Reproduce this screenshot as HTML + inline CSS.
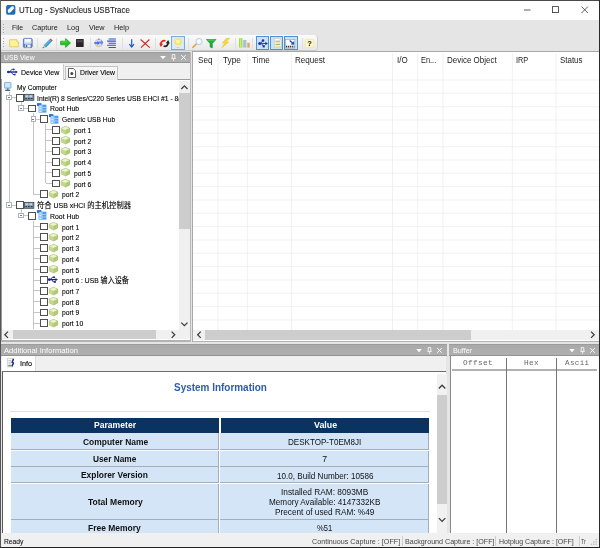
<!DOCTYPE html>
<html><head><meta charset="utf-8"><title>UTLog - SysNucleus USBTrace</title>
<style>
*{box-sizing:border-box;margin:0;padding:0}
html,body{width:600px;height:548px;overflow:hidden;background:#e5e5e5}
body{position:relative;font-family:"Liberation Sans","Noto Sans CJK SC",sans-serif;color:#1a1a1a}
.a{position:absolute}
i{display:block;position:absolute;font-style:normal}
span{position:absolute;white-space:nowrap;line-height:1}
svg{position:absolute;overflow:visible}
/* title */
#title{left:0;top:0;width:600px;height:20px;background:#fff;border-top:0.9px solid #4a4a4a}
#ttext{left:19.6px;top:5.9px;font-size:8.7px;color:#1c1c1c;-webkit-text-stroke:0.1px #1c1c1c}
/* menu */
#menubar{left:0;top:20px;width:600px;height:14px;background:#e5e5e5}
.mi{top:23.6px;font-size:8.05px;color:#1a1a1a}
/* toolbar */
#toolbar{left:1px;top:35px;width:317.2px;height:16px;background:linear-gradient(#fbfbfb,#f2f2f2 50%,#e8e8e8);border-radius:0 3.5px 3.5px 0;border-right:1px solid #cfcfcf;border-bottom:1px solid #c9c9c9}
.sep{width:0.9px;height:11px;top:37.6px;background:#dfdfdf}
.grip{left:3.4px;width:1px;background:repeating-linear-gradient(#a8a8a8 0 1px,transparent 1px 2.6px)}
/* panel headers */
.ph{background:linear-gradient(#a9a9a9,#b0b0b0);height:10.8px;border-top:0.6px solid #9c9c9c;border-bottom:1px solid #929292}
.pht{font-size:7.4px;color:#fff;top:1.4px;left:4px}
.hic{top:0;height:10px}
/* tree */
.tl{font-size:8.1px;color:#000;-webkit-text-stroke:0.12px #000;line-height:11px;height:11px;transform:scaleX(.83);transform-origin:0 0}
.tl em{font-style:normal;font-size:8.5px}
.cb{width:7.9px;height:7.8px;border:0.8px solid #505050;background:#fff}
.ex{width:5.4px;height:5.4px;border:0.7px solid #a9b4c0;background:#fff}
.ex:after{content:"";position:absolute;left:0.8px;right:0.8px;top:1.6px;height:0.8px;background:#6f7f95}
.vl{width:0.7px;background:#c4c4c4}
.hl{height:0.7px;background:#c4c4c4}
/* grid */
.gh{font-size:8.3px;top:56px;color:#1c1c1c}
/* scrollbars */
.sb{background:#f0f0f0}
.th{background:#cdcdcd}
/* info */
.ih{font-size:8.2px;font-weight:bold;text-align:center;line-height:1}
.cell{background:#d5e5f8;border-right:0.8px solid #a3aebb;border-bottom:0.8px solid #a3aebb}
.hd{background:#0a3360;border:0.6px solid #0a3360}
.ct{font-size:8.8px;color:#111;text-align:center;transform:translateX(-50%)}
.cb2{font-weight:bold;font-size:8.9px}
.st{font-size:7.6px;color:#444;top:537.6px}
.mono{font-family:"Liberation Mono",monospace;font-size:8px;color:#686868;top:358.6px;letter-spacing:0.35px}
#root{position:absolute;left:0;top:0;width:600px;height:548px;overflow:hidden;filter:saturate(1.001)}
</style></head><body><div id="root">

<!-- title bar -->
<div id="title" class="a"></div>
<svg style="left:5.9px;top:4.7px" width="9.6" height="10" viewBox="0 0 9.6 10"><rect x="0.1" y="0.1" width="9.3" height="9.7" rx="1.7" fill="#1f6db6"></rect><path d="M2.1 7.4 1.7 5 5.6 1.4 7.4 1.6 8 3.4 4.6 7.3 2.8 7.9Z" fill="#f4faff"></path><path d="M5.6 1.4 7.4 1.6 8 3.4" fill="none" stroke="#cfe6fa" stroke-width="0.5"></path></svg>
<span id="ttext" style="transform: scaleX(0.9095); left: 19.4px; transform-origin: 0px 0px;">UTLog - SysNucleus USBTrace</span>
<svg style="left:523px;top:5px" width="70" height="10" viewBox="0 0 70 10"><path d="M0.9 5h6.6" stroke="#333" stroke-width="0.8"></path><rect x="29.4" y="1.6" width="6" height="6" fill="none" stroke="#333" stroke-width="0.8"></rect><path d="M58.5 1.6 64.9 8M64.9 1.6 58.5 8" stroke="#333" stroke-width="0.8"></path></svg>

<!-- menu bar -->
<div id="menubar" class="a"></div>
<i class="grip" style="top:23.5px;height:9px"></i>
<span class="mi" style="left: 11.6px; transform: scaleX(0.8559); transform-origin: 0px 0px;">File</span>
<span class="mi" style="left: 32.4px; transform: scaleX(0.9008); transform-origin: 0px 0px;">Capture</span>
<span class="mi" style="left: 67.4px; transform: scaleX(0.9153); transform-origin: 0px 0px;">Log</span>
<span class="mi" style="left: 89.1px; transform: scaleX(0.9019); transform-origin: 0px 0px;">View</span>
<span class="mi" style="left: 114.4px; transform: scaleX(0.9057); transform-origin: 0px 0px;">Help</span>

<!-- toolbar -->
<div id="toolbar" class="a"></div>
<i class="grip" style="top:38px;height:10px"></i>
<i style="left:171.1px;top:36.1px;width:13.8px;height:13.5px;background:#d9eaf8;border:0.9px solid #78aadc"></i>
<i style="left:255.8px;top:36.3px;width:13.7px;height:13.3px;background:#cbe3f8;border:0.9px solid #4a92d4"></i>
<i style="left:269.9px;top:36.3px;width:13.2px;height:13.3px;background:#cbe3f8;border:0.9px solid #4a92d4"></i>
<i style="left:283.5px;top:36.3px;width:14.2px;height:13.3px;background:#cbe3f8;border:0.9px solid #4a92d4"></i>
<i class="sep" style="left:37px"></i>
<i class="sep" style="left:56.3px"></i>
<i class="sep" style="left:89.6px"></i>
<i class="sep" style="left:122.3px"></i>
<i class="sep" style="left:155px"></i>
<i class="sep" style="left:188px"></i>
<i class="sep" style="left:234.5px"></i>
<i class="sep" style="left:252.4px"></i>
<i class="sep" style="left:301.8px"></i>
<svg style="left:9.0px;top:38.6px" width="10.2" height="8.4" viewBox="0 0 10.2 8.4"><path d="M0.6 0.7h7.4v2.2h1.6v2.2l-0.8 0.6 0.8 0.6v1.5h-9z" fill="#fdf294" stroke="#d6bd4e" stroke-width="0.7"></path></svg>
<svg style="left:23.3px;top:38.3px" width="9.6" height="10" viewBox="0 0 9.6 10"><rect x="0.4" y="0.4" width="8.8" height="9.2" rx="1.1" fill="#5a84cc" stroke="#4468b0" stroke-width="0.7"></rect><rect x="1.3" y="0.9" width="7" height="4.6" fill="#f6f9fe"></rect><rect x="1.3" y="3.6" width="7" height="1.9" fill="#d6e3f5"></rect><rect x="2.1" y="6.5" width="5.4" height="2.9" fill="#eef2fa"></rect><rect x="2.8" y="7" width="1.5" height="2.2" fill="#4468b0"></rect></svg>
<svg style="left:41.6px;top:37.6px" width="11" height="10.6" viewBox="0 0 11 10.6"><path d="M1.8 7.2 7.4 1.6 9.6 3.8 4 9.4Z" fill="#2aa2e2"></path><path d="M7.4 1.6 8.6 0.5 10.7 2.6 9.6 3.8Z" fill="#e2452f"></path><path d="M0.5 10.2 1.8 7.2 4 9.4Z" fill="#edb84a"></path><path d="M0.5 10.2 1 9 1.9 9.8Z" fill="#5a3a1a"></path><path d="M2.6 7.9 8.2 2.4" stroke="#7fd0f5" stroke-width="0.7"></path></svg>
<svg style="left:60.1px;top:38.2px" width="11" height="10" viewBox="0 0 11 10"><path d="M0.6 3.2h5V0.6L10.5 5 5.6 9.4V6.8H0.6Z" fill="#24c424" stroke="#1a9a1e" stroke-width="0.7" stroke-linejoin="round"></path><path d="M1.2 3.9h5V2" stroke="#6fe36f" stroke-width="0.6" fill="none"></path></svg>
<svg style="left:76.0px;top:39.1px" width="7.8" height="8" viewBox="0 0 7.8 8"><rect x="0" y="0" width="7.7" height="7.9" rx="0.5" fill="#262626"></rect><rect x="0.8" y="0.8" width="6.1" height="2.6" fill="#484848"></rect></svg>
<svg style="left:93.6px;top:38.2px" width="9.6" height="10" viewBox="0 0 9.6 10"><circle cx="4.9" cy="5" r="3.9" fill="#d4dcec" stroke="#a9b4cc" stroke-width="0.5"></circle><path d="M0.3 4.3h3.2V2.8L5.6 5 3.5 7.2V5.7H0.3Z" fill="#3d5fd0"></path><path d="M5.2 3.4h2V2.1L9.4 4.5 7.2 6.9V5.6H5.2Z" fill="#6a86dc"></path><path d="M2.6 8.2h3" stroke="#e8d060" stroke-width="1"></path><path d="M4.9 0.4v1.6" stroke="#3a3a6a" stroke-width="0.6"></path></svg>
<svg style="left:107.4px;top:38.0px" width="9" height="10" viewBox="0 0 9 10"><path d="M1.6 1h7.3M0.1 3.1h8.8M1.6 5.2h7.3M0.1 7.3h8.8M1.6 9.4h7.3" stroke="#2455da" stroke-width="1.05"></path></svg>
<svg style="left:129.0px;top:39.4px" width="5.4" height="8.6" viewBox="0 0 5.4 8.6"><path d="M2.7 0.2v7.4" stroke="#1a50c8" stroke-width="1.15"></path><path d="M0.4 5.2 2.7 8 5 5.2" stroke="#1a50c8" stroke-width="1.15" fill="none"></path></svg>
<svg style="left:140.3px;top:38.9px" width="10.4" height="9" viewBox="0 0 10.4 9"><path d="M0.6 0.5 9.8 8.6M9.4 0.5 1 8.6" stroke="#d22a22" stroke-width="1.15" fill="none"></path></svg>
<svg style="left:158.8px;top:38.9px" width="11" height="9" viewBox="0 0 11 9"><path d="M2 5.6A3.2 3.2 0 0 1 6.4 1.9" stroke="#dc2a22" stroke-width="1.8" fill="none"></path><path d="M0.2 4.4 4.2 4.8 1.8 8Z" fill="#dc2a22"></path><path d="M9 3.2A3.2 3.2 0 0 1 4.6 7" stroke="#222" stroke-width="1.8" fill="none"></path><path d="M10.8 4.5 6.8 4.2 9.2 1Z" fill="#222"></path></svg>
<svg style="left:174.0px;top:37.6px" width="8" height="10.6" viewBox="0 0 8 10.6"><circle cx="4" cy="3.8" r="3.5" fill="#fbe25a"></circle><circle cx="4" cy="3.6" r="2" fill="#fff6b0"></circle><path d="M2.6 6.8h2.8v2.4h-2.8z" fill="#f3ecc8"></path><path d="M2.8 9.2h2.4v0.8h-2.4z" fill="#d8c88a"></path></svg>
<svg style="left:192.0px;top:38.0px" width="11" height="10.2" viewBox="0 0 11 10.2"><path d="M4.8 5.6 0.8 9.4" stroke="#e2a644" stroke-width="1.5" stroke-linecap="round"></path><circle cx="7" cy="3.6" r="3.1" fill="#eef7ff" stroke="#a9c4dc" stroke-width="0.8"></circle><circle cx="6.4" cy="3" r="1.2" fill="#fff"></circle></svg>
<svg style="left:205.8px;top:38.6px" width="10.4" height="9.4" viewBox="0 0 10.4 9.4"><path d="M0.4 0.5h9.6L6.3 4.6V9L4.1 7.9V4.6Z" fill="#1fae3c" stroke="#158530" stroke-width="0.6" stroke-linejoin="round"></path><path d="M1.6 1.2h7.2" stroke="#5fd878" stroke-width="0.7"></path></svg>
<svg style="left:221.0px;top:38.2px" width="9.2" height="10" viewBox="0 0 9.2 10"><path d="M5.4 0.3 1.2 5h2.4L1 9.7 7.8 3.9H5.2L8.8 0.3Z" fill="#f6d838" stroke="#e8b830" stroke-width="0.4"></path></svg>
<svg style="left:239.0px;top:38.2px" width="11" height="10" viewBox="0 0 11 10"><rect x="0" y="0.2" width="3.4" height="9.4" fill="#a6da3c"></rect><rect x="1" y="0.6" width="1.2" height="8.6" fill="#c8ee78"></rect><rect x="4.1" y="2" width="3.3" height="7.6" fill="#a4c2dc"></rect><rect x="8.3" y="4.8" width="2.4" height="4.8" fill="#e4a452"></rect></svg>
<svg style="left:257.8px;top:38.8px" width="10" height="9" viewBox="0 0 10 9"><g fill="#2432a2"><circle cx="1.7" cy="4.5" r="1.5"></circle><circle cx="5" cy="1.6" r="1.3"></circle><rect x="4.6" y="6.2" width="2.2" height="2.2"></rect><path d="M7.4 2.8 9.9 4.5 7.4 6.2Z"></path></g><path d="M1.7 4.5h6.4M2.4 4.5 5 1.6M3.4 4.5 5.6 7.3" stroke="#2432a2" stroke-width="0.9" fill="none"></path></svg>
<svg style="left:273.6px;top:38.4px" width="7.6" height="9.6" viewBox="0 0 7.6 9.6"><path d="M0.4 0.4h4.6l2.2 2.2v6.6h-6.8z" fill="#fffef4" stroke="#b8b89a" stroke-width="0.5"></path><path d="M1.4 3.2h4.8M1.4 6.4h4.8" stroke="#56b456" stroke-width="0.8"></path><path d="M1.4 4.8h4.8M1.4 8h4.8" stroke="#e8c84a" stroke-width="0.8"></path></svg>
<svg style="left:285.4px;top:38.6px" width="10.4" height="9.4" viewBox="0 0 10.4 9.4"><rect x="0.3" y="0.3" width="9.6" height="8.8" fill="#fdfdfd" stroke="#8a8a8a" stroke-width="0.5"></rect><path d="M4.8 1.4 8 4.4" stroke="#2050c8" stroke-width="1.4"></path><path d="M9.2 2 9.2 5.8 5.6 5.4Z" fill="#2050c8"></path><path d="M1 7.6h8.4" stroke="#333" stroke-width="1.8" stroke-dasharray="1.2 0.7"></path></svg>
<svg style="left:304.6px;top:39.0px" width="9.2" height="9" viewBox="0 0 9.2 9"><rect x="0.3" y="0.3" width="8.6" height="8.4" rx="1.2" fill="#fdf7c6" stroke="#e4dc9a" stroke-width="0.5"></rect><text x="4.6" y="7.3" font-size="7.6" font-weight="bold" text-anchor="middle" font-family="Liberation Sans,sans-serif" fill="#111">?</text></svg>

<!-- USB View panel -->
<div class="a ph" style="left:1px;top:52px;width:188.6px"><span class="pht" style="transform: scaleX(0.9233); left: 2.6px; transform-origin: 0px 0px;">USB View</span></div>
<svg style="left:158px;top:53px" width="30" height="9" viewBox="0 0 30 9"><path d="M2.2 3 7.8 3 5 6.3Z" fill="#fff"></path><path d="M14.2 1.6v3.8M16.8 1.6v3.8M13.4 5.4h4.4M15.6 5.4v2.6M14.2 1.6h2.6" stroke="#fff" stroke-width="0.8" fill="none"></path><path d="M23.2 2 27.8 6.8M27.8 2 23.2 6.8" stroke="#fff" stroke-width="0.9"></path></svg>
<!-- tab strip -->
<div class="a" style="left:1px;top:63px;width:188.6px;height:17.2px;background:#f0f0f0;border-bottom:1px solid #9c9c9c"></div>
<div class="a" style="left:2px;top:64.2px;width:61.8px;height:16.3px;background:#fff;border-right:1px solid #d0d0d0"></div>
<div class="a" style="left:64.6px;top:66.2px;width:53.4px;height:13.4px;background:linear-gradient(#f8f8f8,#ebebeb);border:1px solid #c2c2c2;border-bottom:none"></div>
<svg style="left:6.5px;top:67.6px" width="11" height="8" viewBox="0 0 11 8"><path d="M0.3 4h9" stroke="#1a2494" stroke-width="1.4"></path><path d="M8.6 2.4 10.9 4 8.6 5.6Z" fill="#1d2fa0"></path><circle cx="1.4" cy="4" r="1.3" fill="#1d2fa0"></circle><path d="M2.6 4 4.8 1.4h1.6M4.2 4 6 6.6h1.2" stroke="#1d2fa0" stroke-width="0.9" fill="none"></path><circle cx="6.8" cy="1.4" r="0.9" fill="#1d2fa0"></circle><rect x="7" y="5.8" width="1.6" height="1.6" fill="#1d2fa0"></rect></svg>
<span class="tl" style="left: 20.9px; top: 66.7px; transform: scaleX(0.8628); transform-origin: 0px 0px;">Device View</span>
<svg style="left:67.5px;top:67.6px" width="8" height="10" viewBox="0 0 8 10"><path d="M0.5 0.5h4.8l2.2 2.2v6.8h-7z" fill="#fff" stroke="#333" stroke-width="0.8"></path><circle cx="3.8" cy="5.6" r="1.5" fill="#444"></circle></svg>
<span class="tl" style="left: 80.3px; top: 67.1px; transform: scaleX(0.8464); transform-origin: 0px 0px;">Driver View</span>
<!-- tree area -->
<div class="a" style="left:1px;top:80px;width:188.6px;height:260px;background:#fff;border-left:1px solid #9a9a9a"></div>
<i class="vl" style="left:8.6px;top:91.8px;height:113.1px"></i>
<i class="hl" style="left:9.0px;top:97.1px;width:7.0px"></i>
<i class="hl" style="left:9.0px;top:204.5px;width:7.0px"></i>
<i class="vl" style="left:20.8px;top:101.5px;height:6.7px"></i>
<i class="hl" style="left:21.2px;top:107.9px;width:7.1px"></i>
<i class="vl" style="left:32.9px;top:113.3px;height:80.9px"></i>
<i class="hl" style="left:33.3px;top:118.6px;width:7.1px"></i>
<i class="hl" style="left:33.3px;top:193.8px;width:7.1px"></i>
<i class="vl" style="left:45.1px;top:124.0px;height:59.4px"></i>
<i class="hl" style="left:45.5px;top:129.3px;width:7.1px"></i>
<i class="hl" style="left:45.5px;top:140.1px;width:7.1px"></i>
<i class="hl" style="left:45.5px;top:150.8px;width:7.1px"></i>
<i class="hl" style="left:45.5px;top:161.6px;width:7.1px"></i>
<i class="hl" style="left:45.5px;top:172.3px;width:7.1px"></i>
<i class="hl" style="left:45.5px;top:183.0px;width:7.1px"></i>
<i class="vl" style="left:20.8px;top:208.9px;height:6.7px"></i>
<i class="hl" style="left:21.2px;top:215.2px;width:7.1px"></i>
<i class="vl" style="left:32.9px;top:220.7px;height:108.8px"></i>
<i class="hl" style="left:33.3px;top:226.0px;width:7.1px"></i>
<i class="hl" style="left:33.3px;top:236.7px;width:7.1px"></i>
<i class="hl" style="left:33.3px;top:247.5px;width:7.1px"></i>
<i class="hl" style="left:33.3px;top:258.2px;width:7.1px"></i>
<i class="hl" style="left:33.3px;top:269.0px;width:7.1px"></i>
<i class="hl" style="left:33.3px;top:279.7px;width:7.1px"></i>
<i class="hl" style="left:33.3px;top:290.4px;width:7.1px"></i>
<i class="hl" style="left:33.3px;top:301.2px;width:7.1px"></i>
<i class="hl" style="left:33.3px;top:311.9px;width:7.1px"></i>
<i class="hl" style="left:33.3px;top:322.7px;width:7.1px"></i>
<svg class="ti" style="left:3.8px;top:81.87px" width="8" height="10" viewBox="0 0 8 10"><rect x="0.4" y="0.4" width="6.6" height="5.8" rx="0.7" fill="#a9d8f6" stroke="#7aa7cf" stroke-width="0.8"></rect><rect x="1.3" y="1.2" width="4.8" height="3.6" fill="#c9e9fc"></rect><rect x="2.8" y="6.4" width="1.8" height="1.4" fill="#5a6f86"></rect><rect x="1.2" y="7.7" width="5" height="1.3" fill="#4f6278"></rect></svg>
<span class="tl" style="left: 17.2px; top: 81.92px; transform: scaleX(0.8152); transform-origin: 0px 0px;">My Computer</span>
<i class="ex" style="left:6.3px;top:94.71px"></i>
<i class="cb" style="left:16.0px;top:93.76px"></i>
<svg class="ti" style="left:24.1px;top:94.21px" width="10.4" height="6.6" viewBox="0 0 10.4 6.6"><rect x="0.3" y="0.3" width="9.6" height="6" fill="#7e93a8" stroke="#2f3a48" stroke-width="0.7"></rect><rect x="1.4" y="1.3" width="2.8" height="2" fill="#c4d2e0"></rect><rect x="5.4" y="1.3" width="2.8" height="2" fill="#c4d2e0"></rect><path d="M1.4 4.6h1.6M4 4.6h1.8M6.8 4.6h1.8" stroke="#27313f" stroke-width="1"></path></svg>
<span class="tl" style="left: 37.2px; top: 92.66px; transform: scaleX(0.8379); transform-origin: 0px 0px;">Intel(R) 8 Series/C220 Series USB EHCI #1 - 8(</span>
<i class="ex" style="left:18.4px;top:105.45px"></i>
<i class="cb" style="left:28.0px;top:104.50px"></i>
<svg class="ti" style="left:36.9px;top:102.85px" width="10" height="10" viewBox="0 0 10 10"><rect x="0" y="0.1" width="4.4" height="3" fill="#2b6fd0"></rect><rect x="1.6" y="1.7" width="7.8" height="7.9" fill="#4b9bf0"></rect><path d="M1.6 4.4h7.8M1.6 7h7.8" stroke="#cfe8ff" stroke-width="0.7"></path><path d="M5.2 1.7v7.9" stroke="#a8d2fb" stroke-width="0.7"></path><rect x="2.2" y="2.4" width="2.4" height="1.4" fill="#dff0ff"></rect><rect x="2.2" y="5" width="2.4" height="1.4" fill="#dff0ff"></rect><rect x="2.2" y="7.6" width="2.4" height="1.4" fill="#dff0ff"></rect></svg>
<span class="tl" style="left: 49.8px; top: 103.4px; transform: scaleX(0.8508); transform-origin: 0px 0px;">Root Hub</span>
<i class="ex" style="left:30.6px;top:116.19px"></i>
<i class="cb" style="left:40.0px;top:115.24px"></i>
<svg class="ti" style="left:48.9px;top:113.59px" width="10" height="10" viewBox="0 0 10 10"><rect x="0" y="0.1" width="4.4" height="3" fill="#2b6fd0"></rect><rect x="1.6" y="1.7" width="7.8" height="7.9" fill="#4b9bf0"></rect><path d="M1.6 4.4h7.8M1.6 7h7.8" stroke="#cfe8ff" stroke-width="0.7"></path><path d="M5.2 1.7v7.9" stroke="#a8d2fb" stroke-width="0.7"></path><rect x="2.2" y="2.4" width="2.4" height="1.4" fill="#dff0ff"></rect><rect x="2.2" y="5" width="2.4" height="1.4" fill="#dff0ff"></rect><rect x="2.2" y="7.6" width="2.4" height="1.4" fill="#dff0ff"></rect></svg>
<span class="tl" style="left: 61.9px; top: 114.14px; transform: scaleX(0.8255); transform-origin: 0px 0px;">Generic USB Hub</span>
<i class="cb" style="left:52.0px;top:125.98px"></i>
<svg class="ti" style="left:60.8px;top:125.53px" width="9" height="8.4" viewBox="0 0 9 8.4"><path d="M4.5 0.3 8.7 2 8.7 6 4.5 8.1 0.3 6 0.3 2Z" fill="#c6d88e"></path><path d="M4.5 0.3 8.7 2 4.5 3.9 0.3 2Z" fill="#edf4d2"></path><path d="M4.5 3.9 8.7 2 8.7 6 4.5 8.1Z" fill="#b2ca76"></path><path d="M4.5 0.3 8.7 2 8.7 6 4.5 8.1 0.3 6 0.3 2Z" fill="none" stroke="#9fb562" stroke-width="0.5"></path></svg>
<span class="tl" style="left:73.8px;top:124.88px">port 1</span>
<i class="cb" style="left:52.0px;top:136.72px"></i>
<svg class="ti" style="left:60.8px;top:136.27px" width="9" height="8.4" viewBox="0 0 9 8.4"><path d="M4.5 0.3 8.7 2 8.7 6 4.5 8.1 0.3 6 0.3 2Z" fill="#c6d88e"></path><path d="M4.5 0.3 8.7 2 4.5 3.9 0.3 2Z" fill="#edf4d2"></path><path d="M4.5 3.9 8.7 2 8.7 6 4.5 8.1Z" fill="#b2ca76"></path><path d="M4.5 0.3 8.7 2 8.7 6 4.5 8.1 0.3 6 0.3 2Z" fill="none" stroke="#9fb562" stroke-width="0.5"></path></svg>
<span class="tl" style="left:73.8px;top:135.62px">port 2</span>
<i class="cb" style="left:52.0px;top:147.46px"></i>
<svg class="ti" style="left:60.8px;top:147.01px" width="9" height="8.4" viewBox="0 0 9 8.4"><path d="M4.5 0.3 8.7 2 8.7 6 4.5 8.1 0.3 6 0.3 2Z" fill="#c6d88e"></path><path d="M4.5 0.3 8.7 2 4.5 3.9 0.3 2Z" fill="#edf4d2"></path><path d="M4.5 3.9 8.7 2 8.7 6 4.5 8.1Z" fill="#b2ca76"></path><path d="M4.5 0.3 8.7 2 8.7 6 4.5 8.1 0.3 6 0.3 2Z" fill="none" stroke="#9fb562" stroke-width="0.5"></path></svg>
<span class="tl" style="left:73.8px;top:146.36px">port 3</span>
<i class="cb" style="left:52.0px;top:158.20px"></i>
<svg class="ti" style="left:60.8px;top:157.75px" width="9" height="8.4" viewBox="0 0 9 8.4"><path d="M4.5 0.3 8.7 2 8.7 6 4.5 8.1 0.3 6 0.3 2Z" fill="#c6d88e"></path><path d="M4.5 0.3 8.7 2 4.5 3.9 0.3 2Z" fill="#edf4d2"></path><path d="M4.5 3.9 8.7 2 8.7 6 4.5 8.1Z" fill="#b2ca76"></path><path d="M4.5 0.3 8.7 2 8.7 6 4.5 8.1 0.3 6 0.3 2Z" fill="none" stroke="#9fb562" stroke-width="0.5"></path></svg>
<span class="tl" style="left:73.8px;top:157.10px">port 4</span>
<i class="cb" style="left:52.0px;top:168.94px"></i>
<svg class="ti" style="left:60.8px;top:168.49px" width="9" height="8.4" viewBox="0 0 9 8.4"><path d="M4.5 0.3 8.7 2 8.7 6 4.5 8.1 0.3 6 0.3 2Z" fill="#c6d88e"></path><path d="M4.5 0.3 8.7 2 4.5 3.9 0.3 2Z" fill="#edf4d2"></path><path d="M4.5 3.9 8.7 2 8.7 6 4.5 8.1Z" fill="#b2ca76"></path><path d="M4.5 0.3 8.7 2 8.7 6 4.5 8.1 0.3 6 0.3 2Z" fill="none" stroke="#9fb562" stroke-width="0.5"></path></svg>
<span class="tl" style="left:73.8px;top:167.84px">port 5</span>
<i class="cb" style="left:52.0px;top:179.68px"></i>
<svg class="ti" style="left:60.8px;top:179.23px" width="9" height="8.4" viewBox="0 0 9 8.4"><path d="M4.5 0.3 8.7 2 8.7 6 4.5 8.1 0.3 6 0.3 2Z" fill="#c6d88e"></path><path d="M4.5 0.3 8.7 2 4.5 3.9 0.3 2Z" fill="#edf4d2"></path><path d="M4.5 3.9 8.7 2 8.7 6 4.5 8.1Z" fill="#b2ca76"></path><path d="M4.5 0.3 8.7 2 8.7 6 4.5 8.1 0.3 6 0.3 2Z" fill="none" stroke="#9fb562" stroke-width="0.5"></path></svg>
<span class="tl" style="left:73.8px;top:178.58px">port 6</span>
<i class="cb" style="left:40.0px;top:190.42px"></i>
<svg class="ti" style="left:48.8px;top:189.97px" width="9" height="8.4" viewBox="0 0 9 8.4"><path d="M4.5 0.3 8.7 2 8.7 6 4.5 8.1 0.3 6 0.3 2Z" fill="#c6d88e"></path><path d="M4.5 0.3 8.7 2 4.5 3.9 0.3 2Z" fill="#edf4d2"></path><path d="M4.5 3.9 8.7 2 8.7 6 4.5 8.1Z" fill="#b2ca76"></path><path d="M4.5 0.3 8.7 2 8.7 6 4.5 8.1 0.3 6 0.3 2Z" fill="none" stroke="#9fb562" stroke-width="0.5"></path></svg>
<span class="tl" style="left:61.7px;top:189.32px">port 2</span>
<i class="ex" style="left:6.3px;top:202.11px"></i>
<i class="cb" style="left:16.0px;top:201.16px"></i>
<svg class="ti" style="left:24.1px;top:201.61px" width="10.4" height="6.6" viewBox="0 0 10.4 6.6"><rect x="0.3" y="0.3" width="9.6" height="6" fill="#7e93a8" stroke="#2f3a48" stroke-width="0.7"></rect><rect x="1.4" y="1.3" width="2.8" height="2" fill="#c4d2e0"></rect><rect x="5.4" y="1.3" width="2.8" height="2" fill="#c4d2e0"></rect><path d="M1.4 4.6h1.6M4 4.6h1.8M6.8 4.6h1.8" stroke="#27313f" stroke-width="1"></path></svg>
<span class="tl" style="left: 37.2px; top: 200.06px; transform: scaleX(0.8592); transform-origin: 0px 0px;"><em>符合</em> USB xHCI <em>的主机控制器</em></span>
<i class="ex" style="left:18.4px;top:212.85px"></i>
<i class="cb" style="left:28.0px;top:211.90px"></i>
<svg class="ti" style="left:36.9px;top:210.25px" width="10" height="10" viewBox="0 0 10 10"><rect x="0" y="0.1" width="4.4" height="3" fill="#2b6fd0"></rect><rect x="1.6" y="1.7" width="7.8" height="7.9" fill="#4b9bf0"></rect><path d="M1.6 4.4h7.8M1.6 7h7.8" stroke="#cfe8ff" stroke-width="0.7"></path><path d="M5.2 1.7v7.9" stroke="#a8d2fb" stroke-width="0.7"></path><rect x="2.2" y="2.4" width="2.4" height="1.4" fill="#dff0ff"></rect><rect x="2.2" y="5" width="2.4" height="1.4" fill="#dff0ff"></rect><rect x="2.2" y="7.6" width="2.4" height="1.4" fill="#dff0ff"></rect></svg>
<span class="tl" style="left: 49.8px; top: 210.8px; transform: scaleX(0.8508); transform-origin: 0px 0px;">Root Hub</span>
<i class="cb" style="left:40.0px;top:222.64px"></i>
<svg class="ti" style="left:48.8px;top:222.19px" width="9" height="8.4" viewBox="0 0 9 8.4"><path d="M4.5 0.3 8.7 2 8.7 6 4.5 8.1 0.3 6 0.3 2Z" fill="#c6d88e"></path><path d="M4.5 0.3 8.7 2 4.5 3.9 0.3 2Z" fill="#edf4d2"></path><path d="M4.5 3.9 8.7 2 8.7 6 4.5 8.1Z" fill="#b2ca76"></path><path d="M4.5 0.3 8.7 2 8.7 6 4.5 8.1 0.3 6 0.3 2Z" fill="none" stroke="#9fb562" stroke-width="0.5"></path></svg>
<span class="tl" style="left:61.7px;top:221.54px">port 1</span>
<i class="cb" style="left:40.0px;top:233.38px"></i>
<svg class="ti" style="left:48.8px;top:232.93px" width="9" height="8.4" viewBox="0 0 9 8.4"><path d="M4.5 0.3 8.7 2 8.7 6 4.5 8.1 0.3 6 0.3 2Z" fill="#c6d88e"></path><path d="M4.5 0.3 8.7 2 4.5 3.9 0.3 2Z" fill="#edf4d2"></path><path d="M4.5 3.9 8.7 2 8.7 6 4.5 8.1Z" fill="#b2ca76"></path><path d="M4.5 0.3 8.7 2 8.7 6 4.5 8.1 0.3 6 0.3 2Z" fill="none" stroke="#9fb562" stroke-width="0.5"></path></svg>
<span class="tl" style="left:61.7px;top:232.28px">port 2</span>
<i class="cb" style="left:40.0px;top:244.12px"></i>
<svg class="ti" style="left:48.8px;top:243.67px" width="9" height="8.4" viewBox="0 0 9 8.4"><path d="M4.5 0.3 8.7 2 8.7 6 4.5 8.1 0.3 6 0.3 2Z" fill="#c6d88e"></path><path d="M4.5 0.3 8.7 2 4.5 3.9 0.3 2Z" fill="#edf4d2"></path><path d="M4.5 3.9 8.7 2 8.7 6 4.5 8.1Z" fill="#b2ca76"></path><path d="M4.5 0.3 8.7 2 8.7 6 4.5 8.1 0.3 6 0.3 2Z" fill="none" stroke="#9fb562" stroke-width="0.5"></path></svg>
<span class="tl" style="left:61.7px;top:243.02px">port 3</span>
<i class="cb" style="left:40.0px;top:254.86px"></i>
<svg class="ti" style="left:48.8px;top:254.41px" width="9" height="8.4" viewBox="0 0 9 8.4"><path d="M4.5 0.3 8.7 2 8.7 6 4.5 8.1 0.3 6 0.3 2Z" fill="#c6d88e"></path><path d="M4.5 0.3 8.7 2 4.5 3.9 0.3 2Z" fill="#edf4d2"></path><path d="M4.5 3.9 8.7 2 8.7 6 4.5 8.1Z" fill="#b2ca76"></path><path d="M4.5 0.3 8.7 2 8.7 6 4.5 8.1 0.3 6 0.3 2Z" fill="none" stroke="#9fb562" stroke-width="0.5"></path></svg>
<span class="tl" style="left:61.7px;top:253.76px">port 4</span>
<i class="cb" style="left:40.0px;top:265.60px"></i>
<svg class="ti" style="left:48.8px;top:265.15px" width="9" height="8.4" viewBox="0 0 9 8.4"><path d="M4.5 0.3 8.7 2 8.7 6 4.5 8.1 0.3 6 0.3 2Z" fill="#c6d88e"></path><path d="M4.5 0.3 8.7 2 4.5 3.9 0.3 2Z" fill="#edf4d2"></path><path d="M4.5 3.9 8.7 2 8.7 6 4.5 8.1Z" fill="#b2ca76"></path><path d="M4.5 0.3 8.7 2 8.7 6 4.5 8.1 0.3 6 0.3 2Z" fill="none" stroke="#9fb562" stroke-width="0.5"></path></svg>
<span class="tl" style="left:61.7px;top:264.50px">port 5</span>
<i class="cb" style="left:40.0px;top:276.34px"></i>
<svg class="ti" style="left:48.0px;top:276.49px" width="9.8" height="7.2" viewBox="0 0 11 8"><path d="M0.3 4h9" stroke="#1a2090" stroke-width="1.4"></path><path d="M8.4 2.2 11 4 8.4 5.8Z" fill="#1a2090"></path><circle cx="1.5" cy="4" r="1.5" fill="#1a2090"></circle><path d="M2.6 4 4.8 1.4h1.6M4.2 4 6 6.6h1.2" stroke="#1a2090" stroke-width="1.1" fill="none"></path><circle cx="6.8" cy="1.4" r="1.1" fill="#1a2090"></circle><rect x="6.8" y="5.6" width="2" height="2" fill="#1a2090"></rect></svg>
<span class="tl" style="left: 61.6px; top: 275.24px; transform: scaleX(0.8325); transform-origin: 0px 0px;">port 6 : USB <em>输入设备</em></span>
<i class="cb" style="left:40.0px;top:287.08px"></i>
<svg class="ti" style="left:48.8px;top:286.63px" width="9" height="8.4" viewBox="0 0 9 8.4"><path d="M4.5 0.3 8.7 2 8.7 6 4.5 8.1 0.3 6 0.3 2Z" fill="#c6d88e"></path><path d="M4.5 0.3 8.7 2 4.5 3.9 0.3 2Z" fill="#edf4d2"></path><path d="M4.5 3.9 8.7 2 8.7 6 4.5 8.1Z" fill="#b2ca76"></path><path d="M4.5 0.3 8.7 2 8.7 6 4.5 8.1 0.3 6 0.3 2Z" fill="none" stroke="#9fb562" stroke-width="0.5"></path></svg>
<span class="tl" style="left:61.7px;top:285.98px">port 7</span>
<i class="cb" style="left:40.0px;top:297.82px"></i>
<svg class="ti" style="left:48.8px;top:297.37px" width="9" height="8.4" viewBox="0 0 9 8.4"><path d="M4.5 0.3 8.7 2 8.7 6 4.5 8.1 0.3 6 0.3 2Z" fill="#c6d88e"></path><path d="M4.5 0.3 8.7 2 4.5 3.9 0.3 2Z" fill="#edf4d2"></path><path d="M4.5 3.9 8.7 2 8.7 6 4.5 8.1Z" fill="#b2ca76"></path><path d="M4.5 0.3 8.7 2 8.7 6 4.5 8.1 0.3 6 0.3 2Z" fill="none" stroke="#9fb562" stroke-width="0.5"></path></svg>
<span class="tl" style="left:61.7px;top:296.72px">port 8</span>
<i class="cb" style="left:40.0px;top:308.56px"></i>
<svg class="ti" style="left:48.8px;top:308.11px" width="9" height="8.4" viewBox="0 0 9 8.4"><path d="M4.5 0.3 8.7 2 8.7 6 4.5 8.1 0.3 6 0.3 2Z" fill="#c6d88e"></path><path d="M4.5 0.3 8.7 2 4.5 3.9 0.3 2Z" fill="#edf4d2"></path><path d="M4.5 3.9 8.7 2 8.7 6 4.5 8.1Z" fill="#b2ca76"></path><path d="M4.5 0.3 8.7 2 8.7 6 4.5 8.1 0.3 6 0.3 2Z" fill="none" stroke="#9fb562" stroke-width="0.5"></path></svg>
<span class="tl" style="left:61.7px;top:307.46px">port 9</span>
<i class="cb" style="left:40.0px;top:319.30px"></i>
<svg class="ti" style="left:48.8px;top:318.85px" width="9" height="8.4" viewBox="0 0 9 8.4"><path d="M4.5 0.3 8.7 2 8.7 6 4.5 8.1 0.3 6 0.3 2Z" fill="#c6d88e"></path><path d="M4.5 0.3 8.7 2 4.5 3.9 0.3 2Z" fill="#edf4d2"></path><path d="M4.5 3.9 8.7 2 8.7 6 4.5 8.1Z" fill="#b2ca76"></path><path d="M4.5 0.3 8.7 2 8.7 6 4.5 8.1 0.3 6 0.3 2Z" fill="none" stroke="#9fb562" stroke-width="0.5"></path></svg>
<span class="tl" style="left: 61.6px; top: 318.2px; transform: scaleX(0.8412); transform-origin: 0px 0px;">port 10</span>
<!-- tree v scrollbar -->
<div class="a sb" style="left:178.8px;top:80.5px;width:10.8px;height:248.5px"></div>
<div class="a th" style="left:178.8px;top:93.3px;width:10.8px;height:135.5px"></div>
<svg style="left:178.8px;top:80.5px" width="10.8" height="249" viewBox="0 0 10.8 249"><path d="M2.28 7.96 5.40 4.84 8.52 7.96" stroke="#3c3c3c" stroke-width="1.25" fill="none"></path><path d="M2.28 241.64 5.40 244.76 8.52 241.64" stroke="#3c3c3c" stroke-width="1.25" fill="none"></path></svg>
<!-- tree h scrollbar -->
<div class="a sb" style="left:2px;top:329.5px;width:176.8px;height:9.5px"></div>
<div class="a th" style="left:13px;top:329.5px;width:143px;height:9.5px"></div>
<div class="a" style="left:178.8px;top:329px;width:10.8px;height:10px;background:#f0f0f0"></div>
<svg style="left:2px;top:329.5px" width="177" height="9.5" viewBox="0 0 177 9.5"><path d="M5.96 1.68 2.84 4.80 5.96 7.92" stroke="#3c3c3c" stroke-width="1.25" fill="none"></path><path d="M169.64 1.68 172.76 4.80 169.64 7.92" stroke="#3c3c3c" stroke-width="1.25" fill="none"></path></svg>
<div class="a" style="left:1px;top:340.1px;width:189.6px;height:1.5px;background:#b2b2b2"></div>
<div class="a" style="left:189.5px;top:52px;width:1.3px;height:289.6px;background:#b8b8b8"></div>

<!-- grid -->
<div class="a" style="left:192px;top:51.4px;width:408px;height:290.2px;background:#fff;border:1px solid #a8a8a8;border-right:none;border-bottom:1.5px solid #b2b2b2"></div>
<svg style="left:193px;top:53px" width="407" height="277" viewBox="0 0 407 277"><g stroke="#eeeeee" stroke-width="0.8" fill="none"><path d="M25.0 0V277"></path><path d="M54.4 0V277"></path><path d="M98.5 0V277"></path><path d="M199.5 0V277"></path><path d="M224.6 0V277"></path><path d="M249.9 0V277"></path><path d="M319.4 0V277"></path><path d="M363.0 0V277"></path><path d="M0 27.0H407"></path><path d="M0 40.3H407"></path><path d="M0 53.7H407"></path><path d="M0 67.0H407"></path><path d="M0 80.3H407"></path><path d="M0 93.7H407"></path><path d="M0 107.0H407"></path><path d="M0 120.3H407"></path><path d="M0 133.6H407"></path><path d="M0 147.0H407"></path><path d="M0 160.3H407"></path><path d="M0 173.6H407"></path><path d="M0 187.0H407"></path><path d="M0 200.3H407"></path><path d="M0 213.6H407"></path><path d="M0 227.0H407"></path><path d="M0 240.3H407"></path><path d="M0 253.6H407"></path><path d="M0 266.9H407"></path></g></svg>
<span class="gh" style="left: 197.8px; transform: scaleX(0.982); transform-origin: 0px 0px;">Seq</span>
<span class="gh" style="left: 223px; transform: scaleX(1); transform-origin: 0px 0px;">Type</span>
<span class="gh" style="left: 251.6px; transform: scaleX(0.9757); transform-origin: 0px 0px;">Time</span>
<span class="gh" style="left: 295.4px; transform: scaleX(0.9739); transform-origin: 0px 0px;">Request</span>
<span class="gh" style="left: 397px; transform: scaleX(0.9659); transform-origin: 0px 0px;">I/O</span>
<span class="gh" style="left: 421.3px; transform: scaleX(0.89); transform-origin: 0px 0px;">En...</span>
<span class="gh" style="left: 447.4px; transform: scaleX(0.9602); transform-origin: 0px 0px;">Device Object</span>
<span class="gh" style="left: 516.4px; transform: scaleX(0.8813); transform-origin: 0px 0px;">IRP</span>
<span class="gh" style="left: 560.3px; transform: scaleX(0.9562); transform-origin: 0px 0px;">Status</span>
<!-- grid h scrollbar -->
<div class="a sb" style="left:193px;top:330px;width:406px;height:9.5px"></div>
<div class="a th" style="left:205px;top:330px;width:266px;height:9.5px"></div>
<svg style="left:193px;top:330px" width="406" height="9.5" viewBox="0 0 406 9.5"><path d="M7.76 1.68 4.64 4.80 7.76 7.92" stroke="#3c3c3c" stroke-width="1.25" fill="none"></path><path d="M398.04 1.68 401.16 4.80 398.04 7.92" stroke="#3c3c3c" stroke-width="1.25" fill="none"></path></svg>

<!-- Additional Information -->
<div class="a ph" style="left:1px;top:344.2px;width:445.6px;height:11.4px"><span class="pht" style="top: 1.5px; transform: scaleX(1.0336); left: 2.7px; transform-origin: 0px 0px;">Additional Information</span></div>
<svg style="left:414.4px;top:345.6px" width="30" height="9" viewBox="0 0 30 9"><path d="M2.2 3 7.8 3 5 6.3Z" fill="#fff"></path><path d="M14.2 1.6v3.8M16.8 1.6v3.8M13.4 5.4h4.4M15.6 5.4v2.6M14.2 1.6h2.6" stroke="#fff" stroke-width="0.8" fill="none"></path><path d="M23.2 2 27.8 6.8M27.8 2 23.2 6.8" stroke="#fff" stroke-width="0.9"></path></svg>
<div class="a" style="left:1px;top:355.8px;width:444.6px;height:15px;background:#f0f0f0"></div>
<div class="a" style="left:2px;top:356.4px;width:33.6px;height:15.2px;background:#fff;border-right:1px solid #dcdcdc"></div>
<svg style="left:7px;top:358.4px" width="8.6" height="9.2" viewBox="0 0 8.6 9.2"><path d="M0.4 0.4h5.2v8.4h-5.2z" fill="#fff" stroke="#b4b4b4" stroke-width="0.6"></path><path d="M1.4 2.4h3M1.4 4.2h3M1.4 6h3" stroke="#9aa0a8" stroke-width="0.7"></path><rect x="1.2" y="7" width="3.4" height="1.4" fill="#8c9a6a"></rect><path d="M6.6 0.8 5.2 4.2 6.4 5 5 8.4" stroke="#1f2f8c" stroke-width="1.5" fill="none"></path></svg>
<span class="tl" style="left: 19.6px; top: 357.7px; transform: scaleX(0.8953); transform-origin: 0px 0px;">Info</span>
<!-- content -->
<div class="a" style="left:1.6px;top:370.6px;width:444px;height:162.6px;background:#fff;border-left:1.4px solid #5a5a5a;border-top:1.2px solid #6e6e6e"></div>
<span style="left: 173.6px; top: 383px; font-size: 10.1px; font-weight: bold; color: rgb(45, 92, 168); transform: scaleX(0.9858); transform-origin: 0px 0px;" id="sysinfo">System Information</span>
<div class="a" style="left:9.6px;top:410.7px;width:420.6px;height:1.8px;background:#b0b0b0;border-bottom:0.6px solid #e0e0e0"></div>
<div class="a hd" style="left:11px;top:417.5px;width:207.8px;height:15.2px"></div>
<div class="a hd" style="left:220.5px;top:417.5px;width:208.7px;height:15.2px"></div>
<span class="ct cb2" style="left: 94.3px; top: 420.6px; color: rgb(255, 255, 255); transform: scaleX(0.9673); transform-origin: 0px 0px;">Parameter</span>
<span class="ct cb2" style="left: 313.5px; top: 420.7px; color: rgb(255, 255, 255); transform: scaleX(0.9999); transform-origin: 0px 0px;">Value</span>
<div class="a cell" style="left:11px;top:433.3px;width:208.4px;height:17.0px"></div>
<div class="a cell" style="left:220.2px;top:433.3px;width:209.0px;height:17.0px"></div>
<span class="ct cb2" style="left: 82.5px; top: 437.9px; color: rgb(17, 17, 17); transform: scaleX(0.951); transform-origin: 0px 0px;">Computer Name</span>
<span class="ct" style="left: 287.9px; top: 438px; color: rgb(17, 17, 17); transform: scaleX(0.9161); transform-origin: 0px 0px;">DESKTOP-T0EM8JI</span>
<div class="a cell" style="left:11px;top:450.8px;width:208.4px;height:16.0px"></div>
<div class="a cell" style="left:220.2px;top:450.8px;width:209.0px;height:16.0px"></div>
<span class="ct cb2" style="left: 93.4px; top: 454.9px; color: rgb(17, 17, 17); transform: scaleX(0.9337); transform-origin: 0px 0px;">User Name</span>
<span class="ct" style="left:324.6px;top:455.0px;color:#111">7</span>
<div class="a cell" style="left:11px;top:467.3px;width:208.4px;height:15.9px"></div>
<div class="a cell" style="left:220.2px;top:467.3px;width:209.0px;height:15.9px"></div>
<span class="ct cb2" style="left: 81.4px; top: 471.4px; color: rgb(17, 17, 17); transform: scaleX(0.9483); transform-origin: 0px 0px;">Explorer Version</span>
<span class="ct" style="left: 276.8px; top: 471.5px; color: rgb(17, 17, 17); transform: scaleX(0.9221); transform-origin: 0px 0px;">10.0, Build Number: 10586</span>
<div class="a cell" style="left:11px;top:483.7px;width:208.4px;height:35.9px"></div>
<div class="a cell" style="left:220.2px;top:483.7px;width:209.0px;height:35.9px"></div>
<span class="ct cb2" style="left: 87.9px; top: 497.8px; color: rgb(17, 17, 17); transform: scaleX(0.9589); transform-origin: 0px 0px;">Total Memory</span>
<span class="ct" style="left: 281.1px; top: 487.8px; color: rgb(17, 17, 17); transform: scaleX(0.9446); transform-origin: 0px 0px;">Installed RAM: 8093MB</span>
<span class="ct" style="left: 269.1px; top: 497.9px; color: rgb(17, 17, 17); transform: scaleX(0.9272); transform-origin: 0px 0px;">Memory Available: 4147332KB</span>
<span class="ct" style="left: 274.6px; top: 507.9px; color: rgb(17, 17, 17); transform: scaleX(0.9358); transform-origin: 0px 0px;">Precent of used RAM: %49</span>
<div class="a cell" style="left:11px;top:520.1px;width:208.4px;height:15.9px"></div>
<div class="a cell" style="left:220.2px;top:520.1px;width:209.0px;height:15.9px"></div>
<span class="ct cb2" style="left: 88.4px; top: 524.1px; color: rgb(17, 17, 17); transform: scaleX(0.9538); transform-origin: 0px 0px;">Free Memory</span>
<span class="ct" style="left: 317.2px; top: 524.2px; color: rgb(17, 17, 17); transform: scaleX(0.8575); transform-origin: 0px 0px;">%51</span>
<!-- content scrollbar -->
<div class="a sb" style="left:436.5px;top:373.6px;width:10.2px;height:159.6px;background:#f1f1f1"></div>
<div class="a th" style="left:436.5px;top:394.6px;width:10.2px;height:109.6px"></div>
<svg style="left:436.5px;top:371.8px" width="10.2" height="161" viewBox="0 0 10.2 161"><path d="M1.85 16.38 5.10 13.12 8.35 16.38" stroke="#3c3c3c" stroke-width="1.25" fill="none"></path><path d="M1.85 146.22 5.10 149.47 8.35 146.22" stroke="#3c3c3c" stroke-width="1.25" fill="none"></path></svg>

<!-- Buffer -->
<div class="a ph" style="left:449.3px;top:344.2px;width:150.7px;height:11.4px"><span class="pht" style="top: 1.5px; transform: scaleX(0.9799); left: 3.3px; transform-origin: 0px 0px;">Buffer</span></div>
<svg style="left:566.8px;top:345.6px" width="30" height="9" viewBox="0 0 30 9"><path d="M2.2 3 7.8 3 5 6.3Z" fill="#fff"></path><path d="M14.2 1.6v3.8M16.8 1.6v3.8M13.4 5.4h4.4M15.6 5.4v2.6M14.2 1.6h2.6" stroke="#fff" stroke-width="0.8" fill="none"></path><path d="M23.2 2 27.8 6.8M27.8 2 23.2 6.8" stroke="#fff" stroke-width="0.9"></path></svg>
<div class="a" style="left:450px;top:355.8px;width:150px;height:177.4px;background:#fff;border-left:1px solid #8a8a8a"></div>
<div class="a" style="left:452px;top:369.2px;width:145px;height:1.4px;background:#b2b2b2"></div>
<div class="a" style="left:506.4px;top:358px;width:0.8px;height:175.2px;background:#767676"></div>
<div class="a" style="left:556px;top:358px;width:0.8px;height:175.2px;background:#767676"></div>
<span class="mono" style="left: 463.4px; transform: scaleX(0.9739); transform-origin: 0px 0px;">Offset</span>
<span class="mono" style="left: 523.6px; transform: scaleX(0.9771); transform-origin: 0px 0px;">Hex</span>
<span class="mono" style="left: 565px; transform: scaleX(0.947); transform-origin: 0px 0px;">Ascii</span>

<!-- status bar -->
<div class="a" style="left:0;top:533.2px;width:600px;height:14.8px;background:#f0f0f0"></div>
<span class="st" style="left: 3.6px; color: rgb(17, 17, 17); -webkit-text-stroke: 0.1px rgb(17, 17, 17); transform: scaleX(0.8837); transform-origin: 0px 0px;">Ready</span>
<span class="st" style="left: 311.9px; transform: scaleX(0.9455); transform-origin: 0px 0px;">Continuous Capture : [OFF]</span>
<span class="st" style="left: 404.7px; transform: scaleX(0.9382); transform-origin: 0px 0px;">Background Capture : [OFF]</span>
<span class="st" style="left: 498.6px; transform: scaleX(0.9229); transform-origin: 0px 0px;">Hotplug Capture : [OFF]</span>
<span class="st" style="left: 581.2px; transform: scaleX(0.7111); transform-origin: 0px 0px;">Tr</span>
<i class="sep" style="left:401.6px;top:536px;height:10px;background:#cfcfcf"></i>
<i class="sep" style="left:494.6px;top:536px;height:10px;background:#cfcfcf"></i>
<i class="sep" style="left:578.6px;top:536px;height:10px;background:#cfcfcf"></i>
<svg style="left:590px;top:538px" width="8" height="8" viewBox="0 0 8 8"><g fill="#b0b0b0"><rect x="5.6" y="1" width="1.2" height="1.2"></rect><rect x="5.6" y="3.3" width="1.2" height="1.2"></rect><rect x="3.3" y="3.3" width="1.2" height="1.2"></rect><rect x="5.6" y="5.6" width="1.2" height="1.2"></rect><rect x="3.3" y="5.6" width="1.2" height="1.2"></rect><rect x="1" y="5.6" width="1.2" height="1.2"></rect></g></svg>

<!-- window borders -->
<div class="a" style="left:0;top:20px;width:1.2px;height:528px;background:#555"></div>
<div class="a" style="left:0;top:0;width:0.8px;height:20px;background:#666"></div>
<div class="a" style="left:598.8px;top:0;width:1.2px;height:548px;background:#2a2a2a"></div>
<div class="a" style="left:0;top:546.6px;width:600px;height:1.4px;background:#222"></div>
</div>
</body></html>
